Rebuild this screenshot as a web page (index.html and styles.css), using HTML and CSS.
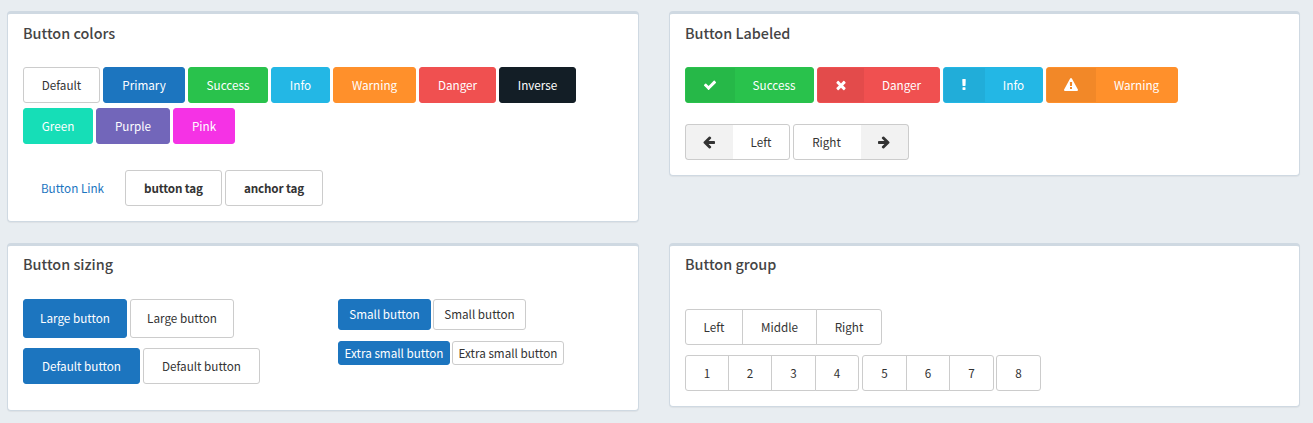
FILE: index.html
```html
<!DOCTYPE html>
<html lang="en">
<head>
<meta charset="utf-8">
<title>Buttons</title>
<link rel="stylesheet" href="styles.css">
</head>
<body>
<main class="page">
  <section class="panel panel-colors">
    <h2 class="panel-title">Button colors</h2>
    <div class="row">
      <button class="btn w77">Default</button>
      <button class="btn primary w82">Primary</button>
      <button class="btn success w80">Success</button>
      <button class="btn info w59">Info</button>
      <button class="btn warning w83">Warning</button>
      <button class="btn danger w77">Danger</button>
      <button class="btn inverse w77">Inverse</button>
    </div>
    <div class="row row-second">
      <button class="btn green w70">Green</button>
      <button class="btn purple w74">Purple</button>
      <button class="btn pink w62">Pink</button>
    </div>
    <div class="row row-tags">
      <a class="btn link w99">Button Link</a>
      <button class="btn bold w97">button tag</button>
      <a class="btn bold w98">anchor tag</a>
    </div>
  </section>

  <section class="panel panel-labeled">
    <h2 class="panel-title">Button Labeled</h2>
    <div class="row">
      <button class="btn labeled success w129"><span class="tag w49"><svg class="icon" width="14" height="14" viewBox="0 0 1792 1792"><path d="M1671 566q0 40-28 68l-724 724-136 136q-28 28-68 28t-68-28l-136-136-362-362q-28-28-28-68t28-68l136-136q28-28 68-28t68 28l294 295 656-657q28-28 68-28t68 28l136 136q28 28 28 68z"/></svg></span><span class="text">Success</span></button>
      <button class="btn labeled danger w123"><span class="tag w46"><svg class="icon" width="14" height="14" viewBox="0 0 1792 1792"><path d="M1490 1322q0 40-28 68l-136 136q-28 28-68 28t-68-28l-294-294-294 294q-28 28-68 28t-68-28l-136-136q-28-28-28-68t28-68l294-294-294-294q-28-28-28-68t28-68l136-136q28-28 68-28t68 28l294 294 294-294q28-28 68-28t68 28l136 136q28 28 28 68t-28 68l-294 294 294 294q28 28 28 68z"/></svg></span><span class="text">Danger</span></button>
      <button class="btn labeled info w100"><span class="tag w41"><svg class="icon" width="14" height="14" viewBox="0 0 1792 1792"><path d="M1088 1248v224q0 26-19 45t-45 19h-256q-26 0-45-19t-19-45v-224q0-26 19-45t45-19h256q26 0 45 19t19 45zm30-1056l-28 768q-1 26-20.500 45t-45.500 19h-256q-26 0-45.500-19t-20.500-45l-28-768q-1-26 17.500-45t44.500-19h320q26 0 44.500 19t17.500 45z"/></svg></span><span class="text">Info</span></button>
      <button class="btn labeled warning w132"><span class="tag w49"><svg class="icon" width="14" height="14" viewBox="0 0 1792 1792"><path d="M1024 1375v-190q0-14-9.500-23.500t-22.500-9.500h-192q-13 0-22.500 9.500t-9.500 23.500v190q0 14 9.500 23.500t22.500 9.500h192q13 0 22.500-9.500t9.500-23.500zm-2-374l18-459q0-12-10-19-13-11-24-11h-220q-11 0-24 11-10 7-10 21l17 457q0 10 10 16.500t24 6.500h185q14 0 23.500-6.500t10.500-16.500zm-14-934l768 1408q35 63-2 126-17 29-46.500 46t-63.500 17h-1536q-34 0-63.500-17t-46.500-46q-37-63-2-126l768-1408q17-31 47-49t65-18 65 18 47 49z"/></svg></span><span class="text">Warning</span></button>
    </div>
    <div class="row row-arrows">
      <button class="btn labeled w105"><span class="tag w47"><svg class="icon" width="14" height="14" viewBox="0 0 1792 1792"><path d="M1664 896v128q0 53-32.500 90.500t-84.500 37.500h-704l293 294q38 36 38 90t-38 90l-75 76q-37 37-90 37-52 0-91-37l-651-652q-37-37-37-90 0-52 37-91l651-650q38-38 91-38 52 0 90 38l75 74q38 38 38 91t-38 91l-293 293h704q52 0 84.500 37.500t32.500 90.500z"/></svg></span><span class="text">Left</span></button>
      <button class="btn labeled w116"><span class="text text-before">Right</span><span class="tag w47"><svg class="icon" width="14" height="14" viewBox="0 0 1792 1792"><path d="M1600 960q0 54-37 91l-651 651q-39 37-91 37-51 0-90-37l-75-75q-38-38-38-91t38-91l293-293h-704q-52 0-84.500-37.500t-32.500-90.500v-128q0-53 32.500-90.500t84.500-37.500h704l-293-294q-38-36-38-90t38-90l75-75q38-38 90-38 53 0 91 38l651 651q37 35 37 90z"/></svg></span></button>
    </div>
  </section>

  <section class="panel panel-sizing">
    <h2 class="panel-title">Button sizing</h2>
    <div class="columns">
      <div class="column">
        <div class="row">
          <button class="btn large primary">Large button</button>
          <button class="btn large">Large button</button>
        </div>
        <div class="row row-default">
          <button class="btn primary w117">Default button</button>
          <button class="btn w117">Default button</button>
        </div>
      </div>
      <div class="column">
        <div class="row row-tight">
          <button class="btn small primary">Small button</button>
          <button class="btn small">Small button</button>
        </div>
        <div class="row row-tight row-mini">
          <button class="btn mini primary">Extra small button</button>
          <button class="btn mini">Extra small button</button>
        </div>
      </div>
    </div>
  </section>

  <section class="panel panel-group">
    <h2 class="panel-title">Button group</h2>
    <div class="group group-words">
      <button class="btn w58">Left</button><button class="btn w75">Middle</button><button class="btn w66">Right</button>
    </div>
    <div class="toolbar">
      <div class="group"><button class="btn w44">1</button><button class="btn w44">2</button><button class="btn w45">3</button><button class="btn w44">4</button></div>
      <div class="group"><button class="btn w45">5</button><button class="btn w44">6</button><button class="btn w45">7</button></div>
      <div class="group group-last"><button class="btn w45">8</button></div>
    </div>
  </section>
</main>
</body>
</html>
```
FILE: styles.css
```css
* { box-sizing: border-box; }

body {
  margin: 0;
  background: #e8edf1;
  color: #333;
  font: 400 11.7px/18px "Noto Sans CJK SC", "Noto Sans", sans-serif;
}

.page {
  display: grid;
  grid-template-columns: 632px 631px;
  grid-template-rows: 211px 168px;
  gap: 21px 30px;
  align-items: start;
  padding: 11px 0 12px 7px;
}

.panel {
  padding: 9px 15px 15px;
  background: #fff;
  border: 1px solid #cfd9e2;
  border-top-width: 3px;
  border-radius: 4px;
  box-shadow: 0 1px 1px rgba(0, 0, 0, .05);
}
.panel-colors { height: 211px; }
.panel-labeled { height: 165px; }
.panel-sizing { height: 168px; }
.panel-group { height: 164px; }

.panel-title {
  margin: 0 0 24px;
  font-size: 14.4px;
  font-weight: 500;
  line-height: 20px;
  color: #444;
}
.panel-sizing .panel-title, .panel-group .panel-title { margin-top: -1px; }

.row, .toolbar { display: flex; gap: 3px; }
.row-tight { gap: 2px; }
.row-second { margin-top: 5px; }
.row-tags { margin-top: 26px; }
.row-arrows { margin-top: 21px; }
.row-default { margin-top: 10px; }
.row-mini { margin-top: 11px; }

.columns { display: grid; grid-template-columns: 315px 1fr; margin-top: 25px; }
.group { display: flex; }
.group-words { margin: 35px 0 10px; }
.group-last { margin-left: -1px; }

.btn {
  display: flex;
  align-items: center;
  justify-content: center;
  height: 36px;
  padding: 0;
  border: 1px solid #ccc;
  border-radius: 3px;
  background: #fff;
  color: #333;
  font: inherit;
  white-space: nowrap;
}
.large { width: 104px; height: 39px; padding-bottom: 1px; }
.small { width: 93px; height: 31px; padding-bottom: 1px; }
.mini { width: 112px; height: 24px; padding-bottom: 1px; }
.bold { font-weight: 700; letter-spacing: -.15px; }

.group .btn { border-radius: 0; }
.group .btn + .btn { margin-left: -1px; }
.group .btn:first-child { border-top-left-radius: 3px; border-bottom-left-radius: 3px; }
.group .btn:last-child { border-top-right-radius: 3px; border-bottom-right-radius: 3px; }

.labeled { justify-content: flex-start; }
.tag {
  display: flex;
  align-items: center;
  justify-content: center;
  height: 34px;
  padding-right: 1px;
  background: rgba(0, 0, 0, .05);
}
.text { flex: 1; text-align: center; }
.text-before { padding-right: 2px; }
.icon { display: block; fill: currentColor; }

.primary, .success, .info, .warning, .danger, .inverse, .green, .purple, .pink { color: #fff; }
.primary { background: #1c75bf; border-color: #1c75bf; }
.success { background: #29c24c; border-color: #29c24c; }
.info { background: #23b7e5; border-color: #23b7e5; }
.warning { background: #ff902b; border-color: #ff902b; }
.danger { background: #f05050; border-color: #f05050; }
.inverse { background: #131e26; border-color: #131e26; }
.green { background: #16deb7; border-color: #16deb7; }
.purple { background: #7266ba; border-color: #7266ba; }
.pink { background: #f532e5; border-color: #f532e5; }
.link { background: none; border-color: transparent; color: #1c75bf; }

.w41 { width: 41px; }
.w44 { width: 44px; }
.w45 { width: 45px; }
.w46 { width: 46px; }
.w47 { width: 47px; }
.w49 { width: 49px; }
.w58 { width: 58px; }
.w59 { width: 59px; }
.w62 { width: 62px; }
.w66 { width: 66px; }
.w70 { width: 70px; }
.w74 { width: 74px; }
.w75 { width: 75px; }
.w77 { width: 77px; }
.w80 { width: 80px; }
.w82 { width: 82px; }
.w83 { width: 83px; }
.w97 { width: 97px; }
.w98 { width: 98px; }
.w99 { width: 99px; }
.w100 { width: 100px; }
.w105 { width: 105px; }
.w116 { width: 116px; }
.w117 { width: 117px; }
.w123 { width: 123px; }
.w129 { width: 129px; }
.w132 { width: 132px; }
```
